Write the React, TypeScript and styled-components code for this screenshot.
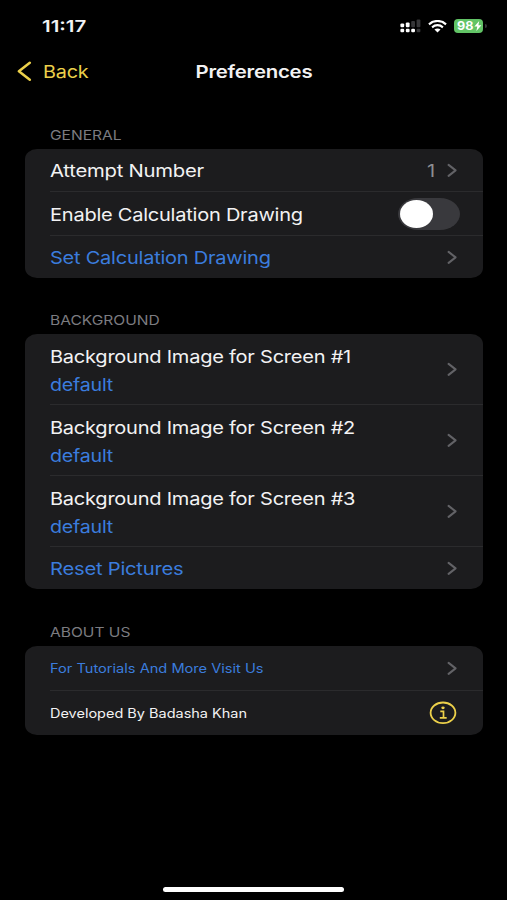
import React from "react";
import styled, { createGlobalStyle } from "styled-components";

const colors = {
  card: "#1c1c1e",
  line: "#2b2b2d",
  blue: "#3b7cdd",
  yellow: "#ecd04a",
  white: "#f2f2f3",
  muted: "#7c7c80",
  chevron: "#626266",
};

const GlobalStyle = createGlobalStyle`
  * { box-sizing: border-box; }
  html, body { margin: 0; background: #000; }
  body { font-family: Inter, "Liberation Sans", sans-serif; }
`;

const Screen = styled.main`
  display: flex;
  flex-direction: column;
  width: 507px;
  height: 900px;
  overflow: hidden;
  background: #000;
`;

const Label = styled.span<{ $color?: string; $stretch?: number }>`
  display: block;
  width: max-content;
  white-space: nowrap;
  font-size: 17.4px;
  font-weight: 400;
  letter-spacing: -0.2px;
  line-height: 28px;
  color: ${(p) => p.$color ?? colors.white};
  transform: translateY(1.2px) scaleX(${(p) => p.$stretch ?? 1.15});
  transform-origin: left;
`;

const Title = styled(Label)`
  font-weight: 600;
  transform-origin: center;
`;

const Clock = styled(Label)`
  font-size: 16.5px;
  font-weight: 600;
  letter-spacing: 0;
  transform: scaleX(1.24);
`;

const SmallLabel = styled(Label)`
  font-size: 12.6px;
  letter-spacing: 0;
`;

const SectionLabel = styled(Label)`
  font-size: 13.3px;
  letter-spacing: 0;
  color: ${colors.muted};
`;

const StatusBar = styled.header`
  display: flex;
  align-items: center;
  justify-content: space-between;
  height: 52px;
  padding: 0 20px 0 41.5px;
`;

const StatusIcons = styled.div`
  display: flex;
  align-items: center;
  gap: 7px;
`;

const Battery = styled.div`
  display: flex;
  align-items: center;
  gap: 2px;
`;

const BatteryBody = styled.div`
  display: flex;
  align-items: center;
  width: 29px;
  height: 14px;
  padding-left: 3px;
  border-radius: 4px;
  background: #62c466;
`;

const BatteryText = styled.span`
  width: 17px;
  font-size: 11.5px;
  font-weight: 700;
  line-height: 14px;
  color: #fff;
  transform: scaleX(1.1);
  transform-origin: left;
`;

const BatteryCap = styled.div`
  width: 2px;
  height: 4px;
  border-radius: 0 2px 2px 0;
  background: #333335;
`;

const NavBar = styled.nav`
  display: grid;
  grid-template-columns: 1fr auto 1fr;
  align-items: center;
  height: 38px;
  padding: 0 16px 0 17px;
`;

const BackButton = styled.button`
  display: flex;
  align-items: center;
  gap: 11px;
  padding: 0;
  border: 0;
  background: none;
  font-family: inherit;
`;

const Section = styled.section`
  display: flex;
  flex-direction: column;
  margin: 0 24.5px 0 25px;
`;

const SectionHeader = styled.div<{ $height: number }>`
  display: flex;
  align-items: flex-end;
  height: ${(p) => p.$height}px;
  padding: 0 0 1px 24.5px;
`;

const Card = styled.div`
  border-radius: 12px / 10px;
  background: ${colors.card};
  overflow: hidden;
`;

const Row = styled.div<{ $height: number }>`
  display: flex;
  align-items: center;
  justify-content: space-between;
  height: ${(p) => p.$height}px;
  margin-left: 24.5px;
  padding-right: 26px;
  & + & { border-top: 1px solid ${colors.line}; }
`;

const Stack = styled.div`
  display: flex;
  flex-direction: column;
  padding-top: 1px;
`;

const Value = styled.div`
  display: flex;
  align-items: center;
  gap: 13px;
`;

const Toggle = styled.div`
  display: flex;
  align-items: center;
  width: 62px;
  height: 32px;
  margin-right: -3px;
  padding: 0 2px;
  border-radius: 20px / 16px;
  background: #39393d;
`;

const Knob = styled.div`
  width: 33px;
  height: 28px;
  border-radius: 50%;
  background: #fff;
`;

const HomeArea = styled.footer`
  display: flex;
  justify-content: center;
  margin-top: auto;
  padding-bottom: 8px;
`;

const HomeIndicator = styled.div`
  width: 181px;
  height: 5px;
  border-radius: 3px;
  background: #fff;
`;

const Chevron = () => (
  <svg width="10" height="14" viewBox="0 0 10 14" fill="none">
    <path d="M1.6 1.9 8.6 7.4 1.6 12.9" stroke={colors.chevron} strokeWidth="2" strokeLinecap="round" strokeLinejoin="round" />
  </svg>
);

const BackChevron = () => (
  <svg width="15" height="21" viewBox="0 0 15 21" fill="none">
    <path d="M12.8 1.7 1.9 10.3l10.9 8.5" stroke={colors.yellow} strokeWidth="2.5" strokeLinecap="round" strokeLinejoin="round" />
  </svg>
);

const Signal = () => (
  <svg width="21" height="14" viewBox="0 0 21 14">
    <g fill="#fff">
      <rect x="0.4" y="4.4" width="3.8" height="3.8" rx="1.2" />
      <rect x="5.8" y="3.4" width="3.8" height="4.8" rx="1.2" />
      <rect x="0.4" y="9.7" width="3.8" height="3.6" rx="1.2" />
      <rect x="5.8" y="9.7" width="3.8" height="3.6" rx="1.2" />
      <rect x="11.2" y="9.7" width="3.8" height="3.6" rx="1.2" />
    </g>
    <g fill="#363638">
      <rect x="11.2" y="2" width="3.8" height="6.2" rx="1" />
      <rect x="16.6" y="0.6" width="3.8" height="7.6" rx="1" />
      <rect x="16.6" y="9.7" width="3.8" height="3.6" rx="1" />
    </g>
  </svg>
);

const Wifi = () => (
  <svg width="19" height="13" viewBox="0 0 20 13" preserveAspectRatio="none">
    <g fill="none" stroke="#fff" strokeWidth="2.2">
      <path d="M1 4.3C6 -.1 14 -.1 19 4.3" />
      <path d="M4.3 7.3c3.3-2.8 8.1-2.8 11.4 0" />
    </g>
    <path d="M6.8 9.6c1.8-1.4 4.6-1.4 6.4 0L10 12.4Z" fill="#fff" />
  </svg>
);

const Bolt = () => (
  <svg width="8" height="10" viewBox="0 0 8 10">
    <path d="M5.2 0 .4 5.6h2.9L2.4 10l5-5.7H4.4Z" fill="#fff" />
  </svg>
);

const InfoIcon = () => (
  <svg width="28" height="24" viewBox="0 0 28 24" fill="none" stroke={colors.yellow}>
    <ellipse cx="14" cy="11.8" rx="12.4" ry="10.3" strokeWidth="1.8" />
    <ellipse cx="14" cy="6.8" rx="1.7" ry="1.4" fill={colors.yellow} stroke="none" />
    <path d="M11.3 10.4h3.2v6.3M10.8 16.9h6.9" strokeWidth="1.7" />
  </svg>
);

const pictures = [
  { name: "Background Image for Screen #1", height: 70 },
  { name: "Background Image for Screen #2", height: 71 },
  { name: "Background Image for Screen #3", height: 71 },
];

export default function App() {
  return (
    <Screen>
      <GlobalStyle />
      <StatusBar>
        <Clock>11:17</Clock>
        <StatusIcons>
          <Signal />
          <Wifi />
          <Battery>
            <BatteryBody>
              <BatteryText>98</BatteryText>
              <Bolt />
            </BatteryBody>
            <BatteryCap />
          </Battery>
        </StatusIcons>
      </StatusBar>
      <NavBar>
        <BackButton>
          <BackChevron />
          <Label $color={colors.yellow} $stretch={1.14}>Back</Label>
        </BackButton>
        <Title $stretch={1.17}>Preferences</Title>
      </NavBar>

      <Section>
        <SectionHeader $height={59}><SectionLabel $stretch={1.17}>GENERAL</SectionLabel></SectionHeader>
        <Card>
          <Row $height={42}>
            <Label $stretch={1.165}>Attempt Number</Label>
            <Value><Label $color="#8d8d92">1</Label><Chevron /></Value>
          </Row>
          <Row $height={44}>
            <Label>Enable Calculation Drawing</Label>
            <Toggle><Knob /></Toggle>
          </Row>
          <Row $height={43}>
            <Label $color={colors.blue}>Set Calculation Drawing</Label>
            <Chevron />
          </Row>
        </Card>
      </Section>

      <Section>
        <SectionHeader $height={56}><SectionLabel $stretch={1.17}>BACKGROUND</SectionLabel></SectionHeader>
        <Card>
          {pictures.map((p) => (
            <Row key={p.name} $height={p.height}>
              <Stack>
                <Label>{p.name}</Label>
                <Label $color={colors.blue} $stretch={1.13}>default</Label>
              </Stack>
              <Chevron />
            </Row>
          ))}
          <Row $height={43}>
            <Label $color={colors.blue} $stretch={1.16}>Reset Pictures</Label>
            <Chevron />
          </Row>
        </Card>
      </Section>

      <Section>
        <SectionHeader $height={57}><SectionLabel $stretch={1.17}>ABOUT US</SectionLabel></SectionHeader>
        <Card>
          <Row $height={44}>
            <SmallLabel $color={colors.blue} $stretch={1.16}>For Tutorials And More Visit Us</SmallLabel>
            <Chevron />
          </Row>
          <Row $height={45}>
            <SmallLabel>Developed By Badasha Khan</SmallLabel>
            <InfoIcon />
          </Row>
        </Card>
      </Section>

      <HomeArea><HomeIndicator /></HomeArea>
    </Screen>
  );
}
